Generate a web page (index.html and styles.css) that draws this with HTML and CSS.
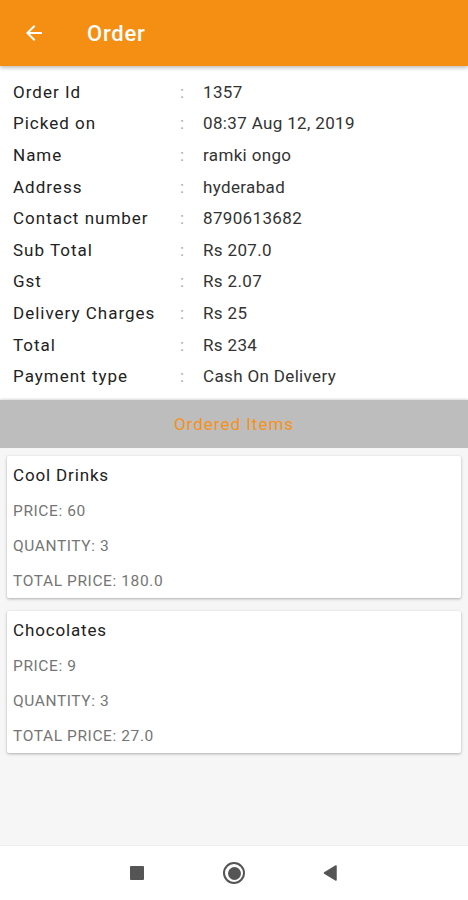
FILE: index.html
```html
<!DOCTYPE html>
<html>
<head>
<meta charset="utf-8">
<link rel="stylesheet" href="styles.css">
</head>
<body>
<div class="screen">
  <header class="appbar">
    <svg class="back" width="24" height="24" viewBox="0 0 24 24"><path d="M20 11H7.83l5.59-5.59L12 4l-8 8 8 8 1.41-1.41L7.83 13H20v-2z" fill="#fff"/></svg>
    <h1 class="title">Order</h1>
  </header>
  <section class="details">
    <div class="row"><span class="label">Order Id</span><span class="colon">:</span><span class="value">1357</span></div>
    <div class="row"><span class="label">Picked on</span><span class="colon">:</span><span class="value">08:37 Aug 12, 2019</span></div>
    <div class="row"><span class="label">Name</span><span class="colon">:</span><span class="value">ramki ongo</span></div>
    <div class="row"><span class="label">Address</span><span class="colon">:</span><span class="value">hyderabad</span></div>
    <div class="row"><span class="label">Contact number</span><span class="colon">:</span><span class="value">8790613682</span></div>
    <div class="row"><span class="label">Sub Total</span><span class="colon">:</span><span class="value">Rs 207.0</span></div>
    <div class="row"><span class="label">Gst</span><span class="colon">:</span><span class="value">Rs 2.07</span></div>
    <div class="row"><span class="label">Delivery Charges</span><span class="colon">:</span><span class="value">Rs 25</span></div>
    <div class="row"><span class="label">Total</span><span class="colon">:</span><span class="value">Rs 234</span></div>
    <div class="row"><span class="label">Payment type</span><span class="colon">:</span><span class="value">Cash On Delivery</span></div>
  </section>
  <div class="section-bar">Ordered Items</div>
  <main class="items">
    <div class="card">
      <div class="card-title">Cool Drinks</div>
      <div class="card-line">PRICE: 60</div>
      <div class="card-line">QUANTITY: 3</div>
      <div class="card-line">TOTAL PRICE: 180.0</div>
    </div>
    <div class="card">
      <div class="card-title">Chocolates</div>
      <div class="card-line">PRICE: 9</div>
      <div class="card-line">QUANTITY: 3</div>
      <div class="card-line">TOTAL PRICE: 27.0</div>
    </div>
  </main>
  <nav class="navbar">
    <span class="nav-square"></span>
    <span class="nav-circle"><span class="nav-dot"></span></span>
    <svg class="nav-back" width="14" height="16" viewBox="0 0 14 16"><path d="M13 1 L13 15 L1.5 8 Z" fill="#555" stroke="#555" stroke-width="1.5" stroke-linejoin="round"/></svg>
  </nav>
</div>
</body>
</html>
```

FILE: styles.css
```css
* { box-sizing: border-box; }
html, body { margin: 0; padding: 0; }
body {
  font-family: Roboto, "Noto Sans", sans-serif;
  background: #f6f6f6;
}
.screen {
  width: 468px;
  height: 900px;
  display: flex;
  flex-direction: column;
  background: #f6f6f6;
}
.appbar {
  height: 66px;
  background: #f48f14;
  display: flex;
  align-items: center;
  padding-left: 22px;
  box-shadow: 0 2px 4px rgba(0,0,0,0.25);
  position: relative;
  z-index: 2;
  flex: none;
}
.back { display: block; margin-top: -1px; }
.title {
  margin: 0 0 0 41px;
  color: #fff;
  font-size: 22px;
  font-weight: 500;
  letter-spacing: 0.8px;
}
.details {
  background: #fff;
  padding: 10px 0 8px 0;
  flex: none;
}
.row {
  display: flex;
  height: 31.6px;
  align-items: center;
  font-size: 17px;
  color: #222;
}
.label { width: 180px; padding-left: 13px; letter-spacing: 1px; }
.colon { width: 23px; color: #aaa; }
.value { color: #333; letter-spacing: 0.35px; }
.section-bar {
  height: 48px;
  background: #bdbdbd;
  color: #f5921a;
  font-size: 17px;
  letter-spacing: 1px;
  display: flex;
  align-items: center;
  justify-content: center;
  flex: none;
  box-shadow: 0 -1px 2px rgba(0,0,0,0.15);
}
.items {
  flex: 1;
  padding: 8px 7px 0 7px;
  display: flex;
  flex-direction: column;
  gap: 13px;
}
.card {
  background: #fff;
  box-shadow: 0 1px 3px rgba(0,0,0,0.3);
  border-radius: 2px;
  padding: 7px 6px 6px 6px;
  height: 142px;
}
.card-title {
  font-size: 17px;
  letter-spacing: 0.85px;
  color: #212121;
  height: 24px;
  line-height: 24px;
  margin-bottom: 12px;
}
.card-line {
  font-size: 15.5px;
  letter-spacing: 0.6px;
  color: #757575;
  height: 35px;
  line-height: 24px;
}
.card-line:last-child { height: 24px; }
.navbar {
  height: 55px;
  background: #fff;
  flex: none;
  display: flex;
  align-items: center;
  border-top: 1px solid #eee;
  position: relative;
}
.nav-square {
  position: absolute;
  left: 130px;
  top: 20px;
  width: 14px;
  height: 14px;
  background: #555;
  border-radius: 1px;
}
.nav-circle {
  position: absolute;
  left: 223px;
  top: 16px;
  width: 22px;
  height: 22px;
  border-radius: 50%;
  border: 2px solid #555;
  display: flex;
  align-items: center;
  justify-content: center;
}
.nav-dot {
  width: 13px;
  height: 13px;
  border-radius: 50%;
  background: #555;
}
.nav-back {
  position: absolute;
  left: 323px;
  top: 19px;
}
```
